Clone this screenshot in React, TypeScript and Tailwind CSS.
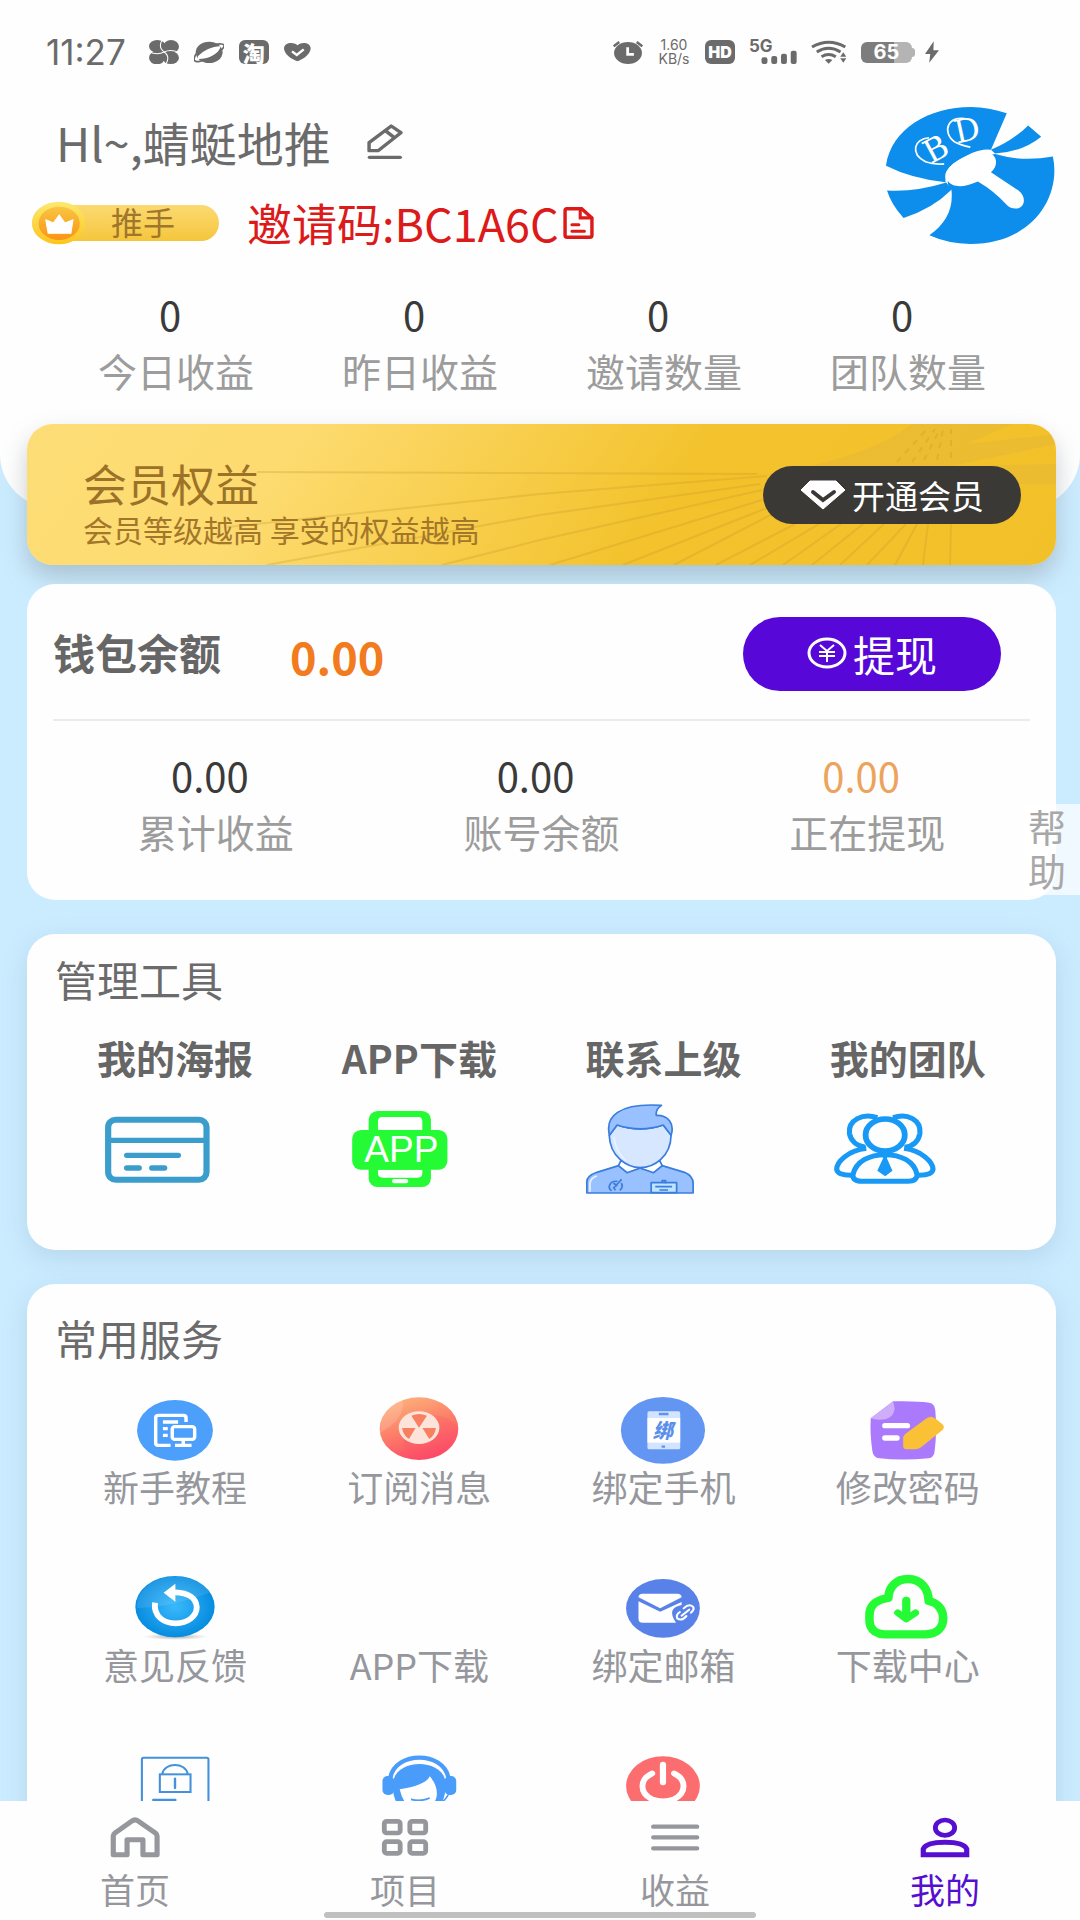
import type { ReactNode } from "react";

const FAN = [
  "M230 48 L730 50", "M200 103 L513 70 L740 52", "M240 141 L513 91 L733 60", "M415 141 L513 116 L735 66",
  "M523 141 L735 76", "M596 141 L745 82", "M647 141 L751 87", "M689 141 L768 100", "M723 141 L792 100",
  "M756 141 L814 100", "M785 141 L836 100", "M813 141 L857 100", "M840 141 L879 100", "M868 141 L890 100",
  "M896 141 L901 100", "M923 141 L924 100",
];

function Art({ box, className, children }: { box: string; className: string; children: ReactNode }) {
  return (
    <svg viewBox={box} preserveAspectRatio="none" fill="none" aria-hidden="true" className={className}>
      {children}
    </svg>
  );
}

function StatusBar() {
  return (
    <div className="flex h-[104px] items-center justify-between pl-[46px] pr-[141px] text-[#6b6b6b]">
      <div className="flex items-center gap-[15px]">
        <span className="mr-2 font-[Inter,sans-serif] text-[35px] leading-10">11:27</span>
        <Art box="453 114 87 72" className="h-6 w-[30px]">
          <g fill="#6b6b6b">
            <ellipse cx="477" cy="133" rx="24" ry="19" />
            <ellipse cx="517" cy="134" rx="23" ry="20" />
            <ellipse cx="476" cy="167" rx="23" ry="20" />
            <ellipse cx="516" cy="167" rx="24" ry="19" />
            <rect x="480" y="132" width="34" height="34" />
          </g>
          <path d="M492 112 Q478 136 497 150 Q516 164 501 188 M453 150 Q478 160 497 150 Q516 140 541 152" stroke="#fff" strokeWidth="3" />
        </Art>
        <Art box="584 114 87 72" className="h-6 w-[30px]">
          <ellipse cx="628" cy="151" rx="39" ry="32" fill="#6b6b6b" />
          <path d="M595 163 Q620 135 662 132 Q650 170 596 171Z" fill="#fff" />
          <path d="M596 149 C578 170 582 182 600 178 C640 172 690 128 664 126 Q655 124 644 129" stroke="#6b6b6b" strokeWidth="5" />
        </Art>
        <span className="flex h-6 w-[30px] items-center justify-center rounded-md bg-[#6b6b6b] text-[22px] font-black leading-6 text-white">淘</span>
        <Art box="850 120 78 60" className="h-5 w-[27px]">
          <path d="M889 178 C870 172 850 155 850 139 C851 122 876 118 889 130 C902 118 926 122 927 139 C927 155 907 172 889 178Z" fill="#6b6b6b" />
          <path d="M873 148 L887 159 L907 142" stroke="#fff" strokeWidth="7" />
        </Art>
      </div>
      <div className="flex items-center gap-[14px]">
        <Art box="219 114 86 72" className="h-6 w-[30px]">
          <ellipse cx="262" cy="153" rx="40" ry="33" fill="#6b6b6b" />
          <path d="M221 133 L237 120 M303 133 L287 120" stroke="#6b6b6b" strokeWidth="7" />
          <path d="M261 136 V157 H279" stroke="#fff" strokeWidth="8" />
        </Art>
        <span className="flex w-[34px] flex-col items-center font-[Inter,sans-serif] text-[14px] leading-[14px]">
          <span>1.60</span>
          <span>KB/s</span>
        </span>
        <span className="flex h-6 w-[30px] items-center justify-center rounded-md bg-[#6b6b6b] font-[Inter,sans-serif] text-[16px] font-black text-white">HD</span>
        <span className="relative h-6 w-12">
          <span className="absolute -top-1 left-0 font-[Inter,sans-serif] text-[17px] font-bold leading-5">5G</span>
          <Art box="609 114 138 72" className="h-6 w-12">
            <g fill="#6b6b6b">
              <rect x="645" y="166" width="17" height="20" rx="6" />
              <rect x="673" y="162" width="17" height="24" rx="6" />
              <rect x="701" y="155" width="17" height="31" rx="6" />
              <rect x="729" y="146" width="17" height="40" rx="6" />
            </g>
          </Art>
        </span>
        <Art box="785 116 106 72" className="h-6 w-9">
          <path d="M788 137 Q837 108 886 137 M802 152 Q837 130 872 152 M816 166 Q837 153 858 166" stroke="#6b6b6b" strokeWidth="9" />
          <path d="M826 176 Q837 170 848 176 L837 187Z M880 153 L889 166 H871Z M880 184 L889 171 H871Z" fill="#6b6b6b" />
        </Art>
        <span className="flex h-[21px] w-[54px] items-center">
          <span className="flex h-[21px] w-[51px] items-center justify-center rounded-md bg-linear-to-r from-[#7d7d7d] from-65% to-[#b4b4b4] to-65% font-[Inter,sans-serif] text-[20px] font-bold text-white">65</span>
          <span className="h-[9px] w-[3px] rounded-r-sm bg-[#b4b4b4]" />
        </span>
        <Art box="1117 120 40 66" className="-ml-1 h-[22px] w-[14px]">
          <path d="M1142 121 L1117 159 H1132 L1129 185 L1157 148 H1141Z" fill="#6b6b6b" />
        </Art>
      </div>
    </div>
  );
}

function Logo() {
  return (
    <div className="relative mt-[3px] h-[137px] w-[170px]">
      <Art box="1005 320 494 410" className="h-[137px] w-[170px]">
        <g fill="#0d8eec">
          <path d="M1005 496 C1020 385 1130 320 1252 320 Q1305 321 1356 339 L1310 448 Q1270 440 1200 490 Q1172 515 1178 545 Q1080 535 1005 496Z" />
          <path d="M1310 448 Q1375 420 1418 375 L1456 409 Q1400 455 1322 459Z" />
          <path d="M1322 461 Q1400 485 1490 468 C1515 590 1430 730 1250 730 Q1185 729 1131 704 Q1205 650 1195 567 Q1165 540 1220 480Z" />
          <path d="M1008 570 Q1090 575 1180 546 L1196 567 Q1140 625 1056 652 Q1020 612 1008 570Z" />
        </g>
        <path d="M1178 520 C1190 485 1250 455 1295 455 C1330 460 1333 495 1310 515 L1390 570 C1412 588 1410 615 1390 623 Q1370 627 1357 614 Q1320 572 1272 543 C1240 556 1220 562 1198 553 Q1175 540 1178 520Z" fill="#fff" />
        <path d="M1244 357 C1185 340 1165 395 1205 425 Q1222 435 1250 440 M1130 412 C1085 415 1075 460 1120 484 Q1145 493 1174 490" stroke="#fff" strokeWidth="5" />
      </Art>
      <span className="absolute left-[34px] top-[24px] w-8 -rotate-[28deg] text-center font-['DejaVu_Serif',serif] text-[32px] leading-9 text-white">B</span>
      <span className="absolute left-[65px] top-[5px] w-8 -rotate-[12deg] text-center font-['DejaVu_Serif',serif] text-[32px] leading-9 text-white">D</span>
    </div>
  );
}

function Profile() {
  return (
    <div className="flex justify-between pl-8 pr-6">
      <div>
        <div className="flex h-[76px] items-center pl-6">
          <h1 className="text-[47px] leading-[60px] text-[#6b6b6b]">Hl~,蜻蜓地推</h1>
          <button type="button" aria-label="编辑昵称" className="ml-9">
            <Art box="1068 372 104 108" className="h-9 w-9">
              <path d="M1074 452 V428 L1138 378 L1166 398 L1100 452Z M1120 391 L1147 413" stroke="#6b6b6b" strokeWidth="10" strokeLinejoin="round" />
              <path d="M1075 472 H1164" stroke="#6b6b6b" strokeWidth="10" strokeLinecap="round" />
            </Art>
          </button>
        </div>
        <div className="flex h-[86px] items-center">
          <div className="relative flex h-9 w-[187px] items-center rounded-full bg-linear-to-b from-[#fcda70] to-[#f5c63a] pl-[79px]">
            <Art box="93 600 154 132" className="absolute -top-1 left-0 h-11 w-[53px]">
              <defs>
                <linearGradient id="coinRim" x1="0" y1="0" x2="0" y2="1">
                  <stop stopColor="#fbe96f" />
                  <stop offset="1" stopColor="#fdc51c" />
                </linearGradient>
                <linearGradient id="coinFace" x1="0" y1="0" x2="0" y2="1">
                  <stop stopColor="#f9c542" />
                  <stop offset="1" stopColor="#fb9417" />
                </linearGradient>
              </defs>
              <ellipse cx="171" cy="666" rx="77" ry="64" fill="url(#coinRim)" />
              <ellipse cx="172" cy="667" rx="60" ry="50" fill="url(#coinFace)" />
              <path d="M140 697 L133 656 L155 666 L172 642 L189 666 L212 656 L206 697Z" fill="#fff" stroke="#fff" strokeWidth="3" strokeLinejoin="round" />
            </Art>
            <span className="pb-1 text-[32px] leading-8 text-[#a0762c]">推手</span>
          </div>
          <p className="ml-7 text-[45px] leading-[56px] text-[#dd1a1a]">邀请码:BC1A6C</p>
          <button type="button" aria-label="复制邀请码" className="ml-1">
            <Art box="72 632 90 94" className="h-8 w-[31px]">
              <path d="M80 637 H126 L156 664 V716 Q156 721 150 721 H84 Q78 721 78 715 V643 Q78 637 84 637Z" stroke="#dd1a1a" strokeWidth="10" />
              <path d="M122 640 V664 H152 M98 684 H118 M98 703 H134" stroke="#dd1a1a" strokeWidth="9" strokeLinecap="round" />
            </Art>
          </button>
        </div>
      </div>
      <Logo />
    </div>
  );
}

function Stat({ value, label, highlight }: { value: string; label: string; highlight?: boolean }) {
  return (
    <div className="flex flex-col items-center">
      <dd className={highlight ? "pr-3 text-[40px] leading-[56px] text-[#eda35c]" : "pr-3 text-[40px] leading-[56px] text-[#3a3a3a]"}>{value}</dd>
      <dt className="order-last text-[39px] leading-[56px] text-[#9c9c9c]">{label}</dt>
    </div>
  );
}

function MemberCard() {
  return (
    <section className="relative -mt-[84px] ml-[27px] mr-6 flex h-[141px] items-center justify-between overflow-hidden rounded-[26px] bg-[linear-gradient(125deg,#fddd76_0%,#fddb70_25%,#f3c22c_62%,#f2c12a_100%)] pl-14 pr-[35px] shadow-[0_12px_24px_rgba(120,130,140,0.4)]">
      <Art box="0 0 1029 141" className="absolute inset-0 h-full w-full">
        <path d="M885 0 Q850 28 770 45 L820 60 L1029 60 V40 L925 42 L1029 20 V10 L940 20 L985 0Z" fill="#e0b43c" opacity="0.35" />
        <g stroke="#c99a2c" strokeWidth="2" opacity="0.3">
          {FAN.map((d) => <path key={d} d={d} />)}
        </g>
        <path d="M870 38 L900 5 M885 38 L908 5 M897 36 L913 5 M910 36 L916 5 M924 34 V5" stroke="#c99a2c" strokeWidth="2" strokeDasharray="6 6" opacity="0.35" />
      </Art>
      <div className="relative pt-3">
        <h2 className="text-[44px] leading-[56px] text-[#9c7128]">会员权益</h2>
        <p className="text-[30px] leading-9 text-[#a3772a]">会员等级越高 享受的权益越高</p>
      </div>
      <button type="button" className="relative flex h-[58px] w-[258px] items-center justify-center gap-[6px] rounded-full bg-[#3a3935] text-[33px] leading-10 text-white">
        <Art box="0 0 46 30" className="h-[30px] w-[46px]">
          <path d="M10 1 H36 L45 10 L23 29 L1 10Z" fill="#fff" stroke="#fff" strokeLinejoin="round" />
          <path d="M13 12 L23 20 L34 12" stroke="#3a3935" strokeWidth="4" strokeLinecap="round" />
        </Art>
        开通会员
      </button>
    </section>
  );
}

function WalletCard() {
  return (
    <section className="relative ml-[27px] mr-6 mt-[19px] h-[316px] rounded-[28px] bg-[#fefefe] px-[26px]">
      <div className="flex h-[137px] items-center border-b-2 border-[#ebebee]">
        <h2 className="text-[42px] font-bold leading-[56px] text-[#666]">钱包余额</h2>
        <strong className="ml-[69px] mt-2 text-[45px] font-bold leading-[56px] text-[#f27a1f]">0.00</strong>
        <button type="button" className="ml-auto mr-[29px] mt-1 flex h-[74px] w-[258px] items-center justify-center gap-[6px] rounded-full bg-[#5707d8] text-[42px] leading-[56px] text-white">
          <Art box="0 0 40 33" className="h-[33px] w-10">
            <ellipse cx="20" cy="16" rx="18" ry="14" stroke="#fff" strokeWidth="3" />
            <path d="M13 8 L20 14 L27 8 M12 15 H28 M12 19 H28 M20 14 V25" stroke="#fff" strokeWidth="2" />
          </Art>
          提现
        </button>
      </div>
      <dl className="mt-[26px] grid grid-cols-3">
        <Stat value="0.00" label="累计收益" />
        <Stat value="0.00" label="账号余额" />
        <Stat value="0.00" label="正在提现" highlight />
      </dl>
    </section>
  );
}

const PosterIcon = (
  <Art box="267 552 378 270" className="h-[90px] w-[130px]">
    <rect x="314" y="599" width="286" height="180" rx="22" stroke="#3a9dcb" strokeWidth="18" />
    <path d="M314 661 H600" stroke="#3a9dcb" strokeWidth="16" />
    <path d="M368 706 H518 M368 744 H404 M441 744 H478" stroke="#3a9dcb" strokeWidth="16" strokeLinecap="round" />
  </Art>
);

const AppIcon = (
  <span className="relative block h-[90px] w-[130px]">
    <Art box="976 552 378 270" className="h-[90px] w-[130px]">
      <rect x="1071" y="573" width="181" height="228" rx="26" fill="#25fb35" />
      <path d="M1098 630 V604 Q1098 591 1112 591 H1214 Q1227 591 1227 604 V630Z M1098 749 H1227 V760 Q1227 773 1214 773 H1112 Q1098 773 1098 760Z" fill="#fff" />
      <rect x="1139" y="777" width="47" height="13" rx="6" fill="#fff" />
      <rect x="1023" y="630" width="277" height="119" rx="26" fill="#25fb35" />
    </Art>
    <span className="absolute left-[17px] top-[26px] w-24 text-center font-['Liberation_Sans',sans-serif] text-[37px] font-medium leading-[39px] text-white">APP</span>
  </span>
);

const LeaderIcon = (
  <Art box="119 552 378 270" className="h-[90px] w-[130px]">
    <g stroke="#3b7ddd" strokeWidth="5" strokeLinejoin="round">
      <path d="M136 819 V785 Q136 768 165 757 L228 737 L253 757 L291 744 L330 757 L355 737 L420 757 Q445 768 445 790 V819Z" fill="#9ac1ff" />
      <path d="M235 722 L228 737 L253 758 L291 744Z M348 722 L355 737 L330 758 L291 744Z" fill="#fff" />
      <path d="M201 645 C203 712 255 743 291 743 C330 743 380 712 381 645 L358 615 Q292 638 224 615Z" fill="#d6e7ff" />
      <path d="M202 646 C188 590 228 548 353 556 Q335 568 338 586 C372 585 392 610 381 646 L358 615 Q292 638 224 615Z" fill="#99c0ff" />
      <rect x="323" y="788" width="74" height="30" fill="#bfe4ff" />
      <path d="M335 800 H384 M347 810 H372 M355 788 V782 H365 V790" />
      <path d="M225 784 C200 782 196 805 208 812 M213 790 L223 796 L214 803 L219 811 M237 778 L222 795 M236 789 Q243 800 232 811" />
    </g>
    <path d="M145 815 V790 Q147 774 165 768 M214 650 Q222 700 250 722" stroke="#e9f3ff" strokeWidth="5" />
  </Art>
);

const TeamIcon = (
  <Art box="828 552 378 270" className="h-[90px] w-[130px]">
    <g stroke="#1799f5" strokeWidth="15">
      <path d="M980 593 C938 578 895 600 899 640 C903 664 922 678 945 682 M1026 593 C1068 578 1108 600 1104 640 C1100 664 1084 678 1060 682" />
      <path d="M948 685 C895 692 862 725 862 748 Q864 766 905 766 M1058 685 C1108 692 1142 725 1142 748 Q1140 766 1100 766" />
      <ellipse cx="1003" cy="645" rx="57" ry="48" strokeWidth="17" />
      <path d="M909 765 C918 722 960 704 1003 704 C1046 704 1088 722 1096 765 Q1094 784 1070 784 H935 Q909 784 909 765Z" />
    </g>
    <path d="M988 688 H1018 L1008 715 L1024 752 L1003 769 L980 752 L997 715Z" fill="#1799f5" />
  </Art>
);

const TOOLS = [
  { label: "我的海报", icon: PosterIcon },
  { label: "APP下载", icon: AppIcon },
  { label: "联系上级", icon: LeaderIcon },
  { label: "我的团队", icon: TeamIcon },
];

const GuideIcon = (
  <Art box="366 270 290 240" className="h-20 w-[100px]">
    <ellipse cx="511" cy="391" rx="110" ry="91" fill="#4c9ffa" />
    <path d="M498 436 H462 Q455 436 455 430 V353 Q455 346 463 346 H535 Q543 346 543 353 V366 M476 366 H520 M476 386 H490 M476 406 H490" stroke="#fff" strokeWidth="10" />
    <rect x="503" y="380" width="65" height="38" rx="7" stroke="#fff" strokeWidth="10" />
    <path d="M535 420 V436 M511 436 H559" stroke="#fff" strokeWidth="10" />
  </Art>
);

const NewsIcon = (
  <Art box="1074 270 290 240" className="h-20 w-[100px]">
    <defs>
      <linearGradient id="newsBall" x1="0.2" y1="0" x2="0.6" y2="1">
        <stop stopColor="#fdb47c" />
        <stop offset="0.5" stopColor="#fc7f68" />
        <stop offset="1" stopColor="#fd4568" />
      </linearGradient>
    </defs>
    <ellipse cx="1219" cy="386" rx="114" ry="94" fill="url(#newsBall)" />
    <path d="M1106 398 C1106 340 1140 308 1172 303 Q1178 360 1106 398Z" fill="#fff" opacity="0.15" />
    <path d="M1172 420 Q1180 470 1235 479 Q1330 465 1332 385 Q1310 345 1240 345 Z" fill="#fb5563" opacity="0.25" />
    <ellipse cx="1219" cy="383" rx="59" ry="49" fill="#fde4da" />
    <path d="M1219 383 L1197 347 Q1219 337 1242 347Z M1209 384 H1170 Q1172 405 1190 417Z M1229 384 H1268 Q1266 405 1249 417Z" fill="#f87f60" />
  </Art>
);

const BindPhoneIcon = (
  <span className="relative block h-20 w-[100px]">
    <Art box="215 270 290 240" className="h-20 w-[100px]">
      <ellipse cx="357" cy="391" rx="122" ry="100" fill="#6396f3" />
      <rect x="312" y="334" width="95" height="114" rx="5" fill="#d2e4ff" />
      <rect x="312" y="354" width="95" height="74" fill="#fff" />
      <path d="M345 342 H373 M353 440 H363" stroke="#5f94ee" strokeWidth="7" />
    </Art>
    <span className="absolute left-[33px] top-[28px] w-8 text-center text-[20px] font-black italic leading-6 text-[#5a90ea]">绑</span>
  </span>
);

const PasswordIcon = (
  <Art box="923 270 290 240" className="h-20 w-[100px]">
    <path d="M1025 304 Q1090 302 1130 308 Q1145 310 1147 330 Q1153 390 1145 455 Q1143 473 1128 475 Q1050 482 985 475 Q968 473 965 455 Q957 400 960 355Z" fill="#ab79fb" />
    <path d="M1025 304 L960 355 Q980 362 1005 357 Q1028 350 1029 325Z" fill="#cfaef9" />
    <path d="M1001 377 H1066 M1001 414 H1036" stroke="#fff" strokeWidth="16" strokeLinecap="round" />
    <path d="M1054 438 V412 Q1055 407 1060 402 L1122 355 Q1135 346 1146 355 L1168 373 Q1176 382 1168 390 L1107 441 Q1100 447 1090 448 H1064 Q1054 448 1054 438Z" fill="#fac136" />
  </Art>
);

const FeedbackIcon = (
  <Art box="366 804 290 240" className="h-20 w-[100px]">
    <defs>
      <radialGradient id="feedbackBall">
        <stop stopColor="#3ab9fb" />
        <stop offset="1" stopColor="#068ce0" />
      </radialGradient>
      <radialGradient id="feedbackShade">
        <stop stopColor="#666" stopOpacity="0.6" />
        <stop offset="1" stopColor="#999" stopOpacity="0" />
      </radialGradient>
    </defs>
    <ellipse cx="513" cy="1010" rx="95" ry="10" fill="url(#feedbackShade)" />
    <ellipse cx="511" cy="920" rx="115" ry="92" fill="url(#feedbackBall)" />
    <path d="M400 925 Q500 922 612 878 C590 840 545 830 511 829 C450 830 398 870 400 925Z" fill="#fff" opacity="0.1" />
    <path d="M453 908 C448 950 480 970 513 970 C548 970 574 948 574 922 C573 895 550 878 511 877" stroke="#fff" strokeWidth="17" />
    <path d="M478 878 L512 851 V905Z" fill="#fff" />
  </Art>
);

const BindMailIcon = (
  <Art box="215 804 290 240" className="h-20 w-[100px]">
    <ellipse cx="357" cy="925" rx="107" ry="88" fill="#5982e8" />
    <path d="M286 892 Q286 881 298 881 H398 Q411 881 411 892 L349 925Z" fill="#fff" />
    <path d="M286 904 L349 935 L411 906 V915 Q365 925 395 968 H298 Q286 968 286 956Z" fill="#fff" />
    <path d="M417 925 Q432 910 444 920 Q450 928 438 938 M425 948 Q412 964 399 956 Q393 945 406 936 M411 947 L433 929" stroke="#fff" strokeWidth="6" strokeLinecap="round" />
  </Art>
);

const CloudIcon = (
  <Art box="923 804 290 240" className="h-20 w-[100px]">
    <path d="M1000 1003 C950 1000 955 960 957 935 C963 905 990 897 1011 894 C1012 860 1035 837 1068 837 C1105 837 1127 865 1128 903 C1155 908 1170 930 1170 955 C1170 985 1150 1002 1120 1003Z" stroke="#25fb35" strokeWidth="25" strokeLinejoin="round" />
    <path d="M1063 902 V945" stroke="#25fb35" strokeWidth="24" strokeLinecap="round" />
    <path d="M1038 938 L1063 957 L1090 938" stroke="#25fb35" strokeWidth="20" strokeLinecap="round" strokeLinejoin="round" />
  </Art>
);

const PrivacyIcon = (
  <Art box="366 138 290 240" className="h-20 w-[100px]">
    <rect x="415" y="173" width="193" height="190" rx="5" stroke="#4390dc" strokeWidth="6" />
    <rect x="467" y="223" width="89" height="53" stroke="#4390dc" strokeWidth="6" />
    <path d="M474 222 C480 186 542 186 548 222" stroke="#4390dc" strokeWidth="6" />
    <path d="M511 236 V264 M448 300 H512" stroke="#4390dc" strokeWidth="7" strokeLinecap="round" />
  </Art>
);

const SupportIcon = (
  <Art box="1074 138 290 240" className="h-20 w-[100px]">
    <path d="M1136 232 C1152 153 1288 153 1304 232" stroke="#4a9cfb" strokeWidth="13" />
    <path d="M1146 236 C1165 177 1275 177 1294 236 Q1300 280 1285 310 H1155 Q1138 280 1146 236Z" fill="#4a9cfb" />
    <rect x="1113" y="228" width="34" height="57" rx="15" fill="#4a9cfb" />
    <rect x="1293" y="228" width="34" height="57" rx="15" fill="#4a9cfb" />
    <path d="M1163 268 Q1240 255 1250 229 Q1275 258 1270 290 Q1260 330 1220 332 Q1175 325 1163 268Z" fill="#fff" />
    <path d="M1196 298 Q1222 306 1250 294 Q1225 306 1196 298Z M1285 308 Q1302 292 1306 278" stroke="#4a9cfb" strokeWidth="5" />
  </Art>
);

const LogoutIcon = (
  <Art box="215 138 290 240" className="h-20 w-[100px]">
    <ellipse cx="357" cy="258" rx="107" ry="89" fill="#fc6d6f" />
    <path d="M326 220 C288 238 288 280 326 298 Q357 310 388 298 C426 280 426 238 389 220" stroke="#fff" strokeWidth="17" strokeLinecap="round" />
    <path d="M357 194 V247" stroke="#fff" strokeWidth="18" strokeLinecap="round" />
  </Art>
);

const SERVICES: { label: string; icon: ReactNode }[] = [
  { label: "新手教程", icon: GuideIcon },
  { label: "订阅消息", icon: NewsIcon },
  { label: "绑定手机", icon: BindPhoneIcon },
  { label: "修改密码", icon: PasswordIcon },
  { label: "意见反馈", icon: FeedbackIcon },
  { label: "APP下载", icon: null },
  { label: "绑定邮箱", icon: BindMailIcon },
  { label: "下载中心", icon: CloudIcon },
];

const MORE_SERVICES: { name: string; icon: ReactNode }[] = [
  { name: "隐私政策", icon: PrivacyIcon },
  { name: "在线客服", icon: SupportIcon },
  { name: "退出登录", icon: LogoutIcon },
];

const TABS = [
  {
    label: "首页",
    icon: (
      <Art box="306 348 174 132" className="h-11 w-[60px]">
        <path d="M330 464 V408 Q330 403 335 399 L384 363 Q393 356 402 363 L452 399 Q457 403 457 408 V464 H416 V419 H370 V464Z" stroke="#96979d" strokeWidth="15" strokeLinejoin="round" />
      </Art>
    ),
  },
  {
    label: "项目",
    icon: (
      <Art box="1093 348 174 132" className="h-11 w-[60px]">
        <g stroke="#96979d" strokeWidth="14">
          <rect x="1120" y="364" width="46" height="35" rx="7" />
          <rect x="1194" y="364" width="46" height="35" rx="7" />
          <rect x="1120" y="425" width="46" height="35" rx="7" />
          <rect x="1194" y="425" width="46" height="35" rx="7" />
        </g>
      </Art>
    ),
  },
  {
    label: "收益",
    icon: (
      <Art box="310 348 174 132" className="h-11 w-[60px]">
        <path d="M334 380 H461 M334 412 H461 M334 445 H461" stroke="#96979d" strokeWidth="13" strokeLinecap="round" />
      </Art>
    ),
  },
  {
    label: "我的",
    active: true,
    icon: (
      <Art box="1097 348 174 132" className="h-11 w-[60px]">
        <ellipse cx="1184" cy="383" rx="28" ry="23" stroke="#560fd0" strokeWidth="14" />
        <path d="M1121 464 V447 Q1130 427 1184 427 Q1238 427 1247 447 V464Z" stroke="#560fd0" strokeWidth="15" />
      </Art>
    ),
  },
];

export default function App() {
  return (
    <div className="relative flex h-screen flex-col overflow-hidden bg-[#cbecff] font-['Noto_Sans_CJK_SC',sans-serif]">
      <main className="min-h-0 flex-1 overflow-hidden">
        <header className="h-[508px] rounded-b-[54px] bg-[#fefefe]">
          <StatusBar />
          <Profile />
          <dl className="ml-[54px] mr-[50px] mt-5 grid grid-cols-4">
            <Stat value="0" label="今日收益" />
            <Stat value="0" label="昨日收益" />
            <Stat value="0" label="邀请数量" />
            <Stat value="0" label="团队数量" />
          </dl>
        </header>
        <MemberCard />
        <WalletCard />
        <section className="ml-[27px] mr-6 mt-[34px] h-[316px] rounded-[28px] bg-[#fefefe] px-[26px] pt-[15px] shadow-[0_8px_24px_rgba(120,150,180,0.25)]">
          <h2 className="pl-[2px] text-[42px] leading-[60px] text-[#6b6b6b]">管理工具</h2>
          <div className="mt-5 grid grid-cols-4">
            {TOOLS.map((t) => (
              <button key={t.label} type="button" className="flex flex-col items-center text-[39px] font-bold leading-[56px] text-[#666]">
                {t.label}
                <span className="mr-9 mt-[19px] font-normal">{t.icon}</span>
              </button>
            ))}
          </div>
        </section>
        <section className="ml-[27px] mr-6 mt-[34px] rounded-[28px] bg-[#fefefe] px-[26px] pb-10 pt-6 shadow-[0_8px_24px_rgba(120,150,180,0.25)]">
          <h2 className="pl-[2px] text-[42px] leading-[60px] text-[#6b6b6b]">常用服务</h2>
          <div className="mt-[22px] grid grid-cols-4 gap-y-[66px]">
            {SERVICES.map((s) => (
              <button key={s.label} type="button" className="flex flex-col items-center text-[36px] leading-8 text-[#96979d]">
                <span className="block h-20 w-[100px]">{s.icon}</span>
                {s.label}
              </button>
            ))}
            {MORE_SERVICES.map((s) => (
              <button key={s.name} type="button" aria-label={s.name} className="flex flex-col items-center">
                {s.icon}
              </button>
            ))}
          </div>
        </section>
      </main>

      <nav className="grid h-[119px] shrink-0 grid-cols-4 bg-[#fefefe] pt-[15px]">
        {TABS.map((t) => (
          <a
            key={t.label}
            href="#"
            aria-current={t.active ? "page" : undefined}
            className={t.active ? "flex flex-col items-center text-[#560fd0]" : "flex flex-col items-center text-[#96979d]"}
          >
            {t.icon}
            <span className="mt-[7px] text-[35px] leading-[44px]">{t.label}</span>
          </a>
        ))}
      </nav>

      <button type="button" className="absolute right-0 top-[804px] w-14 bg-white/70 pb-[3px] pl-1 text-left text-[38px] leading-[44px] text-[#a8a8a8]">
        帮<br />助
      </button>
      <div className="absolute bottom-[2px] left-[30%] right-[30%] h-[6px] rounded-full bg-[#c0c0c0]" />
    </div>
  );
}
